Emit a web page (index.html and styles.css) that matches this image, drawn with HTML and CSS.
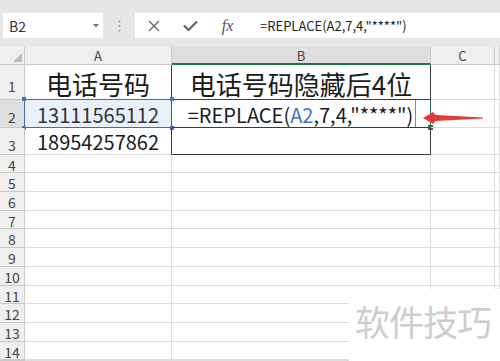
FILE: index.html
```html
<!DOCTYPE html>
<html>
<head>
<meta charset="utf-8">
<link rel="stylesheet" href="styles.css">
</head>
<body>
<div class="app">
  <div class="fbar">
    <div class="namebox"><span>B2</span><svg class="dd" width="6" height="4" viewBox="0 0 6 4"><path d="M0 0H6L3 3.5Z" fill="#777"/></svg></div>
    <div class="sep"><svg width="3" height="12" viewBox="0 0 3 12"><circle cx="1.5" cy="1.5" r="1" fill="#999"/><circle cx="1.5" cy="6" r="1" fill="#999"/><circle cx="1.5" cy="10.5" r="1" fill="#999"/></svg></div>
    <div class="fbox">
      <div class="ic"><svg width="12" height="12" viewBox="0 0 12 12"><path d="M1 1L11 11M11 1L1 11" stroke="#666" stroke-width="1.4" fill="none"/></svg></div>
      <div class="ic"><svg width="15" height="11" viewBox="0 0 15 11"><path d="M1 5.5L5.5 10L14 1.5" stroke="#666" stroke-width="2.2" fill="none"/></svg></div>
      <div class="ic"><span class="fx">fx</span></div>
      <div class="ftext">=REPLACE(A2,7,4,"****")</div>
    </div>
  </div>
  <div class="sheet">
    <div class="c h corner"><svg width="9" height="9" viewBox="0 0 9 9"><path d="M9 0V9H0Z" fill="#bdbdbd"/></svg></div>
    <div class="c h ch">A</div>
    <div class="c h ch sel-col">B</div>
    <div class="c h ch">C</div>
    <div class="c h ch"></div>

    <div class="c h rh big">1</div>
    <div class="c t26 a1">电话号码</div>
    <div class="c t26 b1">电话号码隐藏后4位</div>
    <div class="c"></div>
    <div class="c"></div>

    <div class="c h rh big sel-row">2</div>
    <div class="c t20 a2">13111565112<span class="k k1"></span><span class="k k2"></span><span class="k k3"></span><span class="k k4"></span></div>
    <div class="c t20 b2"><span class="edit">=REPLACE(<span class="ref">A2</span>,7,4,"****")</span><span class="handle"></span></div>
    <div class="c"></div>
    <div class="c"></div>

    <div class="c h rh big">3</div>
    <div class="c t20 a3">18954257862</div>
    <div class="c b3"></div>
    <div class="c"></div>
    <div class="c"></div>

    <div class="c h rh">4</div><div class="c"></div><div class="c"></div><div class="c"></div><div class="c"></div>
    <div class="c h rh">5</div><div class="c"></div><div class="c"></div><div class="c"></div><div class="c"></div>
    <div class="c h rh">6</div><div class="c"></div><div class="c"></div><div class="c"></div><div class="c"></div>
    <div class="c h rh">7</div><div class="c"></div><div class="c"></div><div class="c"></div><div class="c"></div>
    <div class="c h rh">8</div><div class="c"></div><div class="c"></div><div class="c"></div><div class="c"></div>
    <div class="c h rh">9</div><div class="c"></div><div class="c"></div><div class="c"></div><div class="c"></div>
    <div class="c h rh">10</div><div class="c"></div><div class="c"></div><div class="c"></div><div class="c"></div>
    <div class="c h rh">11</div><div class="c"></div><div class="c"></div><div class="c"></div><div class="c"></div>
    <div class="c h rh">12</div><div class="c"></div><div class="c"></div><div class="c"></div><div class="c"></div>
    <div class="c h rh">13</div><div class="c"></div><div class="c"></div><div class="c"></div><div class="c"></div>
    <div class="c h rh">14</div><div class="c"></div><div class="c"></div><div class="c"></div><div class="c"></div>
    <div class="c h"></div><div class="c"></div><div class="c"></div><div class="c"></div><div class="c"></div>
  </div>
  <svg class="arrow" width="66" height="20" viewBox="0 0 66 20"><path d="M3 10L13 4L15.5 7L63 9.4L63 10.6L15.5 13L13 16Z" fill="#e53a3a"/></svg>
  <div class="wm">软件技巧</div>
</div>
</body>
</html>
```

FILE: styles.css
```css
html, body {
  margin: 0;
  padding: 0;
}
.app {
  position: relative;
  width: 500px;
  height: 361px;
  overflow: hidden;
  background: #e7e7e7;
  font-family: "Noto Sans CJK SC", "Noto Sans", sans-serif;
  color: #1b1b1b;
}
.fbar {
  display: flex;
  align-items: center;
  height: 47px;
  padding: 13px 0 9px 3px;
  box-sizing: border-box;
}
.namebox {
  width: 100px;
  height: 25px;
  background: #fff;
  display: flex;
  align-items: center;
  justify-content: space-between;
  padding: 0 4px 0 6px;
  box-sizing: border-box;
  font-size: 14px;
  color: #333;
}
.sep {
  width: 32px;
  display: flex;
  justify-content: center;
}
.fbox {
  flex: 1;
  height: 25px;
  background: #fff;
  display: flex;
  align-items: center;
}
.ic {
  width: 37px;
  display: flex;
  justify-content: center;
  align-items: center;
}
.fx {
  font-family: "Liberation Serif", serif;
  font-style: italic;
  font-size: 16px;
  color: #555;
  line-height: 1;
}
.ftext {
  margin-left: 14px;
  font-size: 13px;
  color: #222;
  white-space: nowrap;
}
.sheet {
  display: grid;
  grid-template-columns: 25px 147px 259px 64px 5px;
  grid-template-rows: 18px 35px 28px 27px 18px 19px 19px 18px 19px 19px 19px 18px 19px 19px 18px;
  background: #fff;
}
.c {
  position: relative;
  border-right: 1px solid #dcdcdc;
  border-bottom: 1px solid #dcdcdc;
  box-sizing: border-box;
  display: flex;
  align-items: flex-end;
  justify-content: center;
  white-space: nowrap;
}
.h {
  background: #efefef;
  border-color: #c9c9c9;
  color: #444;
}
.corner {
  align-items: flex-end;
  justify-content: flex-end;
  padding: 0 2px 2px 0;
}
.ch {
  font-size: 13px;
  align-items: center;
  line-height: 1;
}
.rh {
  font-size: 14px;
  align-items: center;
  line-height: 14px;
  padding-top: 2px;
  overflow: hidden;
}
.rh.big {
  padding-top: 7px;
}
.sel-col {
  background: #dedede;
  border-bottom: 2px solid #227447;
}
.sel-row {
  background: #dedede;
  border-right-color: #3f6db3;
}
.t26 {
  font-size: 26px;
  line-height: 31px;
}
.t20 {
  font-size: 20px;
  line-height: 24px;
}
.a1 {
  border-right-color: #3a3a3a;
  border-bottom-color: #3f6db3;
}
.b1 {
  border-right-color: #3a3a3a;
  border-bottom-color: #3a3a3a;
}
.a2 {
  background: #e8f0fa;
  border-right-color: #227447;
  border-bottom-color: #3f6db3;
  color: #333;
}
.k {
  position: absolute;
  width: 4px;
  height: 4px;
  background: #4472c4;
}
.k1 { left: -3px; top: -3px; }
.k2 { right: -3px; top: -3px; }
.k3 { left: -3px; bottom: -3px; }
.k4 { right: -3px; bottom: -3px; }
.b2 {
  border-right-color: #227447;
  border-bottom-color: #3a3a3a;
}
.edit {
  padding-right: 2px;
  border-right: 1px solid #8a8a8a;
  height: 27px;
  display: flex;
  align-items: flex-end;
  margin-left: 2px;
}
.ref {
  color: #4472c4;
}
.handle {
  position: absolute;
  right: -3px;
  bottom: -3px;
  width: 5px;
  height: 5px;
  background: #227447;
}
.a3 {
  border-right-color: #3a3a3a;
}
.b3 {
  border-right-color: #3a3a3a;
  border-bottom-color: #3a3a3a;
}
.arrow {
  position: absolute;
  left: 420px;
  top: 108px;
}
.wm {
  position: absolute;
  left: 349px;
  top: 289px;
  right: 0;
  bottom: 0;
  background: #fff;
  color: #cdcdcd;
  font-size: 35px;
  line-height: 35px;
  letter-spacing: -1px;
  padding: 14px 0 0 6px;
  box-sizing: border-box;
  white-space: nowrap;
}
```
